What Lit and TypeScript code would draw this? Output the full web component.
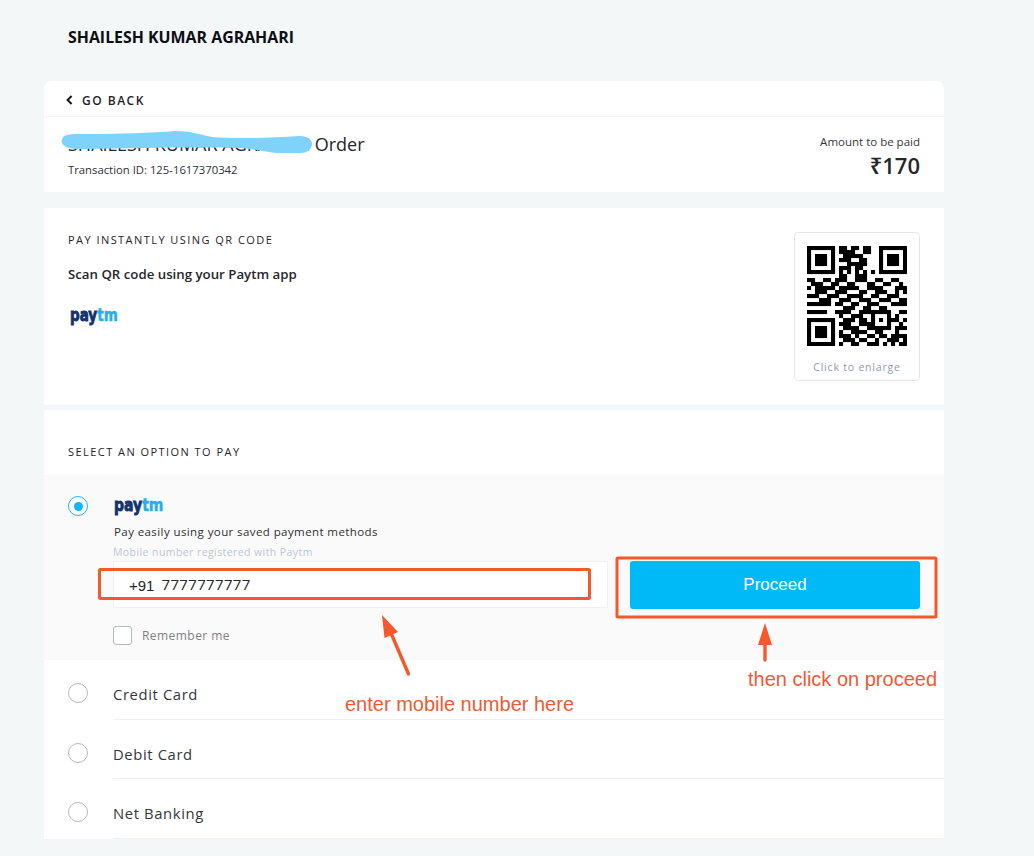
import { LitElement, html, css, svg } from "lit";
import { customElement } from "lit/decorators.js";

const QR = [
  "1111111 0 110110110 0 1111111",
  "1000001 0 111100110 0 1000001",
  "1011101 0 011111000 0 1011101",
  "1011101 0 111001100 0 1011101",
  "1011101 0 001111100 0 1011101",
  "1000001 0 111011000 0 1000001",
  "1111111 0 101010101 0 1111111",
  "0000000 0 110011100 0 0000000",
  "1100110 1 110011100 1 1001100",
  "0111001 1 001100011 0 0110010",
  "1011111 0 111110011 1 1000111",
  "0011100 1 110001100 1 1100101",
  "1110011 1 001111001 1 0011100",
  "0001110 0 111001110 0 1110011",
  "1111110 1 100110011 1 0001111",
  "0000000 0 011100110 0 1100000",
  "1111100 1 11100111 11111 0011",
  "0000000 0 10011100 10001 0100",
  "1111111 0 01110110 10101 1101",
  "1000001 0 11100111 10001 0010",
  "1011101 0 01111001 11111 0111",
  "1011101 0 10011110 01100 0100",
  "1011101 0 11101001 10110 1111",
  "1000001 0 01110110 01001 1101",
  "1111111 0 10011001 11010 1011",
].map((r) => r.replace(/ /g, ""));

const paytm = (big: boolean) =>
  html`<span class="paytm ${big ? "big" : ""}"><span class="pay">pay</span><span class="tm">tm</span></span>`;

@customElement("app-root")
export class AppRoot extends LitElement {
  static styles = css`
    :host {
      display: block;
      position: relative;
      height: 856px;
      overflow: hidden;
      background: #f4f7f8;
      font-family: "Open Sans", "Noto Sans", sans-serif;
      color: #1f2328;
    }
    .merchant {
      padding: 27px 0 0 68px;
      height: 54px;
      box-sizing: border-box;
      font-size: 15.9px;
      font-weight: 700;
      line-height: 20px;
      color: #0c0f14;
    }
    .wrap {
      width: 900px;
      margin-left: 44px;
    }
    .spacer {
      height: 27px;
    }
    .top {
      background: #fff;
      border-radius: 8px 8px 0 0;
    }
    .back {
      height: 36px;
      box-sizing: border-box;
      padding: 3px 0 0 22px;
      display: flex;
      align-items: center;
      gap: 9px;
      border-bottom: 1px solid #f2f4f5;
      font-size: 12px;
      letter-spacing: 1.5px;
      font-weight: 600;
    }
    .order {
      height: 75px;
      padding: 0 24px;
      display: flex;
      justify-content: space-between;
      align-items: flex-start;
    }
    .o-left {
      padding-top: 15px;
    }
    .o-title {
      font-size: 18px;
      line-height: 24px;
      color: #23262b;
    }
    .o-id {
      font-size: 11.3px;
      line-height: 16px;
      margin-top: 6px;
      color: #2d3136;
    }
    .o-right {
      text-align: right;
      padding-top: 17px;
    }
    .o-label {
      font-size: 11.5px;
      line-height: 16px;
      color: #33373c;
    }
    .o-amount {
      font-size: 22px;
      line-height: 28px;
      font-weight: 600;
      margin-top: 1px;
      color: #23262b;
    }
    .qr-card {
      margin-top: 16px;
      height: 197px;
      box-sizing: border-box;
      background: #fff;
      padding: 24px;
      display: flex;
      justify-content: space-between;
    }
    .h {
      font-size: 11px;
      line-height: 16px;
      letter-spacing: 1.45px;
      color: #1f2328;
      text-transform: uppercase;
    }
    .scan {
      font-size: 13.25px;
      line-height: 18px;
      margin-top: 17px;
      font-weight: 600;
      color: #23262b;
    }
    .q-logo {
      margin: 20px 0 0 2px;
      height: 20px;
    }
    .paytm {
      display: inline-block;
      font-family: "DejaVu Sans", sans-serif;
      font-weight: 700;
      font-size: 13.5px;
      line-height: 18px;
      transform: scaleY(1.25);
      transform-origin: left center;
      white-space: nowrap;
    }
    .paytm.big {
      font-size: 14px;
    }
    .pay {
      color: #12326f;
      -webkit-text-stroke: 0.7px #12326f;
    }
    .tm {
      color: #25aee6;
      -webkit-text-stroke: 0.4px #25aee6;
    }
    .qr-box {
      width: 126px;
      height: 149px;
      box-sizing: border-box;
      border: 1px solid #e3e7ea;
      border-radius: 4px;
      display: flex;
      flex-direction: column;
      align-items: center;
      padding-top: 13px;
    }
    .qr-box svg {
      display: block;
    }
    .enlarge {
      font-size: 10.5px;
      letter-spacing: 0.8px;
      color: #8d9bb0;
      margin-top: 14px;
      line-height: 15px;
    }
    .pay-card {
      margin-top: 5px;
      background: #fff;
    }
    .pay-head {
      height: 65px;
      padding: 34px 24px 0;
      box-sizing: border-box;
    }
    .active {
      height: 185px;
      box-sizing: border-box;
      background: #fafafa;
      display: flex;
    }
    .radio-col {
      width: 68px;
      margin-right: 1px;
      flex: none;
      display: flex;
      justify-content: center;
      padding-top: 21px;
      box-sizing: border-box;
    }
    .radio {
      width: 20px;
      height: 20px;
      box-sizing: border-box;
      border-radius: 50%;
      border: 1px solid #b4b9bd;
      background: #fff;
      flex: none;
    }
    .radio.on {
      border: 1.5px solid #1ab5f0;
      display: flex;
      align-items: center;
      justify-content: center;
    }
    .radio.on i {
      width: 9px;
      height: 9px;
      border-radius: 50%;
      background: #0fb6f5;
    }
    .a-body {
      flex: 1;
      padding-top: 18px;
    }
    .a-logo {
      margin-left: 1px;
      height: 20px;
    }
    .a-desc {
      font-size: 11.5px;
      letter-spacing: 0.41px;
      line-height: 16px;
      margin: 11px 0 0 1px;
      color: #2c3036;
    }
    .a-hint {
      font-size: 10.5px;
      line-height: 14px;
      letter-spacing: 0.42px;
      margin-top: 5px;
      color: #c0c6cd;
    }
    .a-form {
      display: flex;
      gap: 22px;
      margin-top: 2px;
    }
    .phone {
      width: 495px;
      height: 47px;
      box-sizing: border-box;
      background: #fff;
      border: 1px solid #f0f1f2;
      display: flex;
      align-items: center;
      padding: 1px 0 0 15px;
      gap: 7px;
      font-family: "Liberation Sans", Arial, sans-serif;
      font-size: 15px;
      color: #24272b;
    }
    .num {
      font-family: "Open Sans", sans-serif;
      font-size: 15px;
      letter-spacing: 0.35px;
      margin-top: -2px;
    }
    .proceed {
      width: 290px;
      height: 48px;
      border: none;
      border-radius: 3px;
      background: #00baf7;
      color: #fff;
      font-family: "Liberation Sans", Arial, sans-serif;
      font-size: 17px;
      padding: 0;
    }
    .remember {
      display: flex;
      align-items: center;
      gap: 10px;
      margin-top: 17px;
      font-size: 12px;
      letter-spacing: 0.45px;
      color: #7d8186;
    }
    .check {
      width: 19px;
      height: 19px;
      box-sizing: border-box;
      border: 1px solid #b4b9bd;
      border-radius: 3px;
      background: #fff;
    }
    .opt {
      display: flex;
      height: 59.5px;
      box-sizing: border-box;
      padding-top: 23px;
    }
    .opt .radio-col {
      padding-top: 0;
    }
    .opt .label {
      flex: 1;
      font-size: 14.8px;
      letter-spacing: 0.62px;
      line-height: 22px;
      color: #33373c;
      border-bottom: 1px solid #f0f1f2;
    }
    .overlay {
      position: absolute;
      left: 0;
      top: 0;
      pointer-events: none;
    }
    .note {
      position: absolute;
      font-family: "Liberation Sans", Arial, sans-serif;
      font-size: 20px;
      line-height: 24px;
      color: #ee5a34;
      white-space: nowrap;
    }
    .n1 { left: 345px; top: 692px; }
    .n2 { left: 748px; top: 667px; }
  `;

  private qr() {
    const cells = QR.flatMap((row, y) =>
      [...row].map((c, x) => (c === "1" ? svg`<rect x=${x} y=${y} width="1.02" height="1.02"/>` : null))
    );
    return html`<svg width="100" height="100" viewBox="0 0 25 25" fill="#000">${cells}</svg>`;
  }

  render() {
    return html`
      <div class="merchant">SHAILESH KUMAR AGRAHARI</div>
      <div class="wrap">
        <div class="spacer"></div>
        <section class="top">
          <div class="back">
            <svg width="7" height="10" viewBox="0 0 7 10"><path d="M5.6 1 1.6 5l4 4" fill="none" stroke="#14171b" stroke-width="2"/></svg>
            <span>GO BACK</span>
          </div>
          <div class="order">
            <div class="o-left">
              <div class="o-title">SHAILESH KUMAR AGRAHARI Order</div>
              <div class="o-id">Transaction ID: 125-1617370342</div>
            </div>
            <div class="o-right">
              <div class="o-label">Amount to be paid</div>
              <div class="o-amount">₹170</div>
            </div>
          </div>
        </section>
        <section class="qr-card">
          <div>
            <div class="h">Pay instantly using QR code</div>
            <div class="scan">Scan QR code using your Paytm app</div>
            <div class="q-logo">${paytm(false)}</div>
          </div>
          <div class="qr-box">
            ${this.qr()}
            <div class="enlarge">Click to enlarge</div>
          </div>
        </section>
        <section class="pay-card">
          <div class="pay-head"><div class="h">Select an option to pay</div></div>
          <div class="active">
            <div class="radio-col"><span class="radio on"><i></i></span></div>
            <div class="a-body">
              <div class="a-logo">${paytm(true)}</div>
              <div class="a-desc">Pay easily using your saved payment methods</div>
              <div class="a-hint">Mobile number registered with Paytm</div>
              <div class="a-form">
                <div class="phone"><span>+91</span><span class="num">7777777777</span></div>
                <button class="proceed">Proceed</button>
              </div>
              <div class="remember"><span class="check"></span><span>Remember me</span></div>
            </div>
          </div>
          ${["Credit Card", "Debit Card", "Net Banking"].map(
            (l) => html`<div class="opt">
              <div class="radio-col"><span class="radio"></span></div>
              <div class="label">${l}</div>
            </div>`
          )}
        </section>
      </div>

      <svg class="overlay" width="1034" height="856" viewBox="0 0 1034 856" fill="none">
        <path d="M62 139C64 133 75 134 90 134 120 134 150 133 176 131 190 131 198 134 212 137 236 139 262 138 300 136 312 136 315 145 309 150 306 154 298 153 284 153 270 154 258 149 240 148 200 147 140 148 80 149 66 149 60 145 62 139Z" fill="#7fd3fb"/>
        <rect x="99.5" y="569.5" width="490" height="29" rx="1" stroke="#f4582b" stroke-width="3"/>
        <rect x="617" y="558" width="319" height="59" rx="1" stroke="#f4582b" stroke-width="3"/>
        <path d="M408.500 674 391 633" stroke="#f4582b" stroke-width="3.4" stroke-linecap="round"/>
        <path d="M382 615 398 632 384.500 638Z" fill="#f4582b"/>
        <path d="M765 660V640" stroke="#f4582b" stroke-width="3.400" stroke-linecap="round"/>
        <path d="M765 623 772 645H758Z" fill="#f4582b"/>
      </svg>
      <div class="note n1">enter mobile number here</div>
      <div class="note n2">then click on proceed</div>
    `;
  }
}
